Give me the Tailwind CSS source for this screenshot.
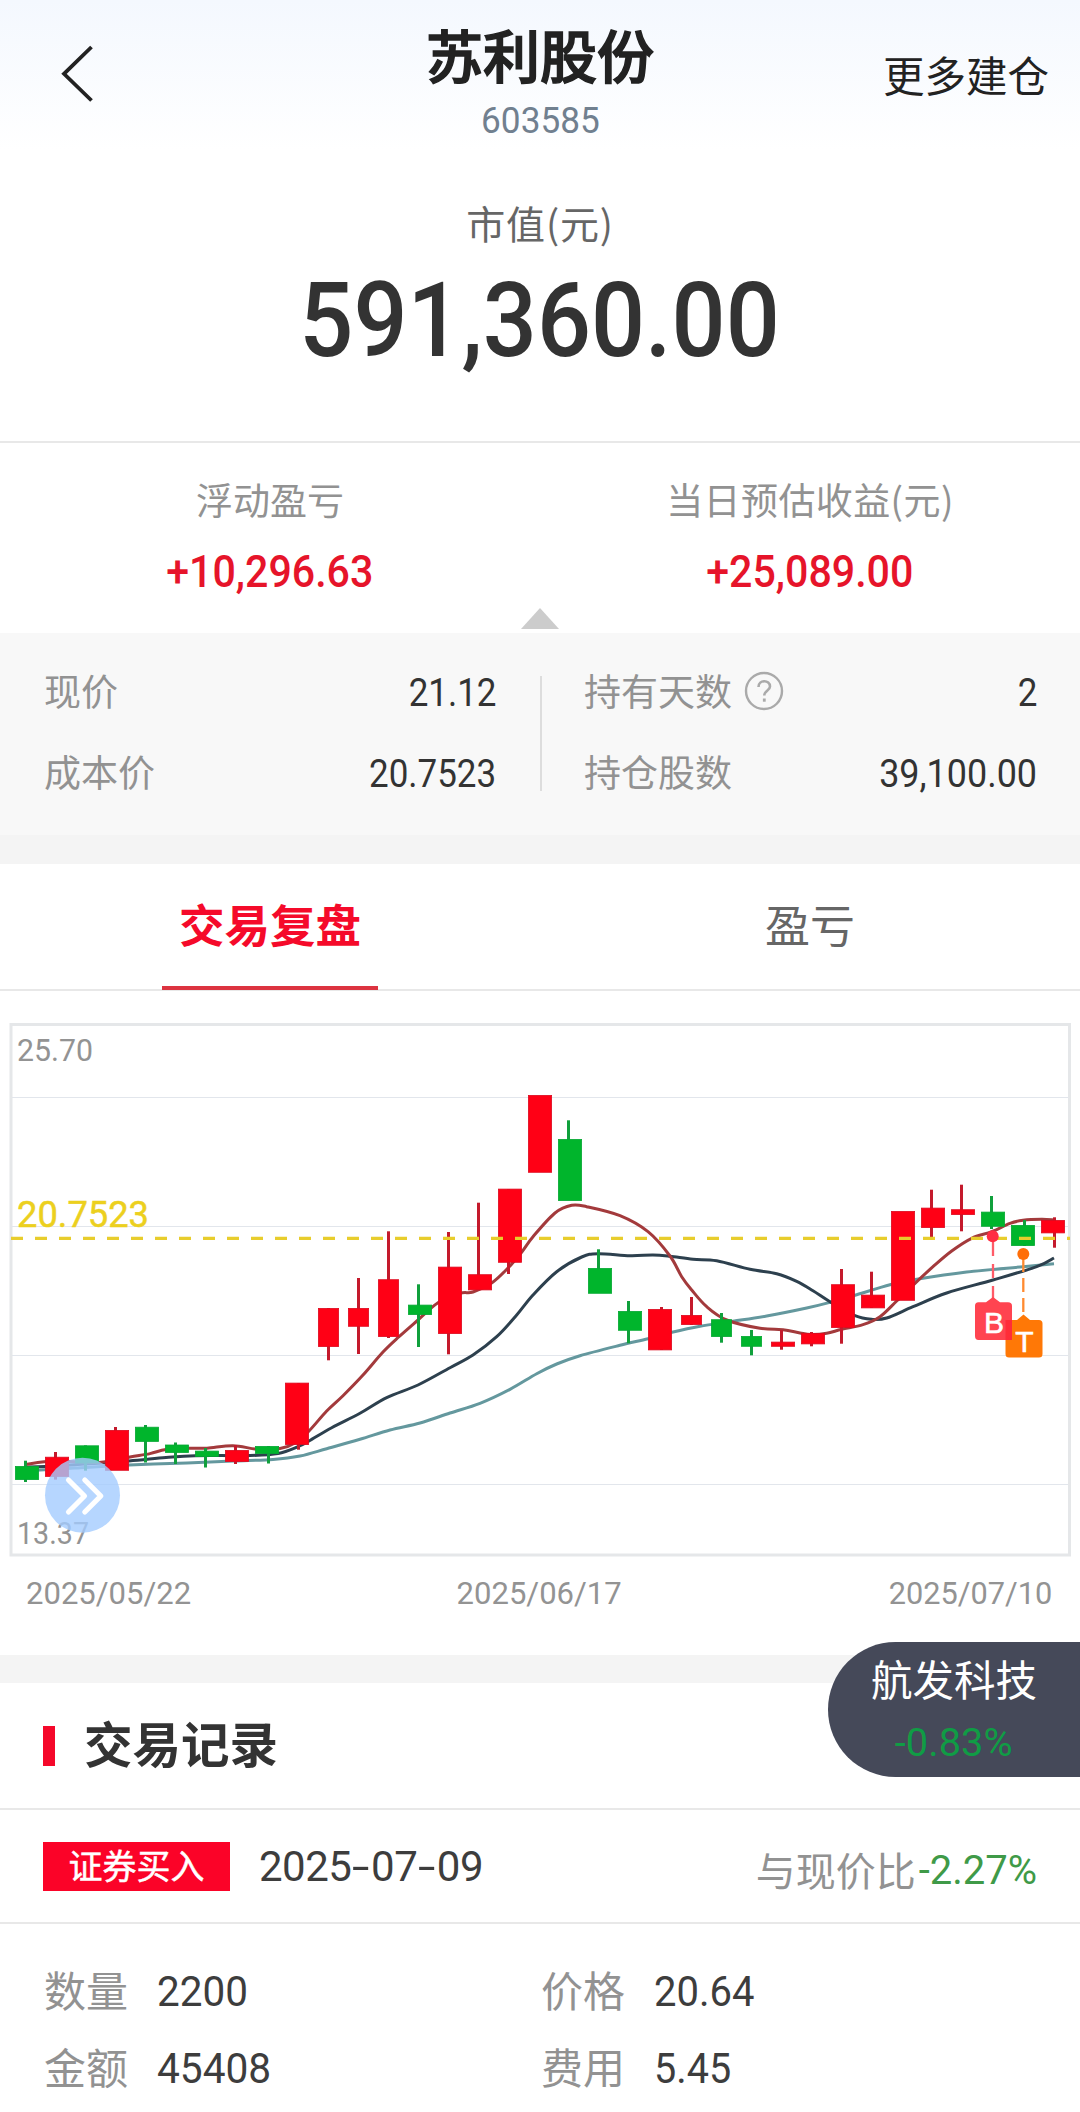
<!DOCTYPE html>
<html lang="zh-CN">
<head>
<meta charset="utf-8">
<title>苏利股份 603585</title>
<script src="https://cdn.jsdelivr.net/npm/@tailwindcss/browser@4"></script>
</head>
<body class="w-[1080px] h-[2112px] overflow-hidden bg-white font-['Noto_Sans_CJK_SC',sans-serif] text-[#333] whitespace-nowrap">
<div class="relative flex flex-col">

  <header class="flex h-[150px] bg-linear-to-b from-[#f4f8fe] to-white">
    <div class="w-[360px] pt-[44px] pl-[59px]">
      <svg class="w-[36px] h-[60px]" viewBox="0 0 36 60" fill="none" stroke="#222" stroke-width="3.800"><path d="M32.500 3 L5 29.800 L32.500 56.500"/></svg>
    </div>
    <div class="w-[360px] pt-[17px] flex flex-col items-center">
      <h1 class="h-[72px] flex items-center text-[57px] leading-none font-medium text-[#222] [-webkit-text-stroke:1.5px_#222]">苏利股份</h1>
      <div class="mt-[12px] h-[40px] flex items-center font-[Roboto,sans-serif] text-[37px] text-[#71808f] scale-x-[0.95]">603585</div>
    </div>
    <div class="w-[360px] pt-[49px] pr-[31px] flex justify-end">
      <span class="h-[50px] flex items-center text-[41.5px] text-[#222]">更多建仓</span>
    </div>
  </header>

  <section class="h-[293px] pt-[48px] flex flex-col items-center border-b-2 border-[#e8e8e8]">
    <div class="h-[48px] flex items-center text-[39px] text-[#666] tracking-[0.8px]">市值(元)</div>
    <div class="mt-[25px] h-[100px] flex items-center font-[Roboto,sans-serif] font-medium text-[104px] leading-none scale-x-[0.915]">591,360.00</div>
  </section>

  <section class="h-[190px] pt-[37px] flex flex-col">
    <div class="grid grid-cols-2 justify-items-center">
      <div class="h-[40px] flex items-center text-[37px] text-[#929292]">浮动盈亏</div>
      <div class="h-[40px] flex items-center text-[37px] text-[#929292] tracking-[0.4px]">当日预估收益(元)</div>
      <div class="mt-[30px] h-[44px] flex items-center font-[Roboto,sans-serif] font-medium text-[44px] text-[#e6142a] scale-x-[0.935]">+10,296.63</div>
      <div class="mt-[30px] h-[44px] flex items-center font-[Roboto,sans-serif] font-medium text-[44px] text-[#e6142a] scale-x-[0.935]">+25,089.00</div>
    </div>
    <svg class="mt-[14px] mx-auto w-[38px] h-[21px]" viewBox="0 0 38 21"><path d="M19 0 L38 21 H0Z" fill="#ccc"/></svg>
  </section>

  <section class="h-[202px] pt-[40px] bg-[#f8f8f8] flex">
    <div class="w-[540px] pl-[44px] pr-[44px] flex flex-col gap-[41px]">
      <div class="h-[40px] flex items-center justify-between"><span class="-translate-y-[2px] text-[37px] text-[#929292]">现价</span><span class="font-[Roboto,sans-serif] text-[38px] origin-right scale-x-[0.92]">21.12</span></div>
      <div class="h-[40px] flex items-center justify-between"><span class="-translate-y-[2px] text-[37px] text-[#929292]">成本价</span><span class="font-[Roboto,sans-serif] text-[38px] origin-right scale-x-[0.92]">20.7523</span></div>
    </div>
    <div class="mt-[3px] w-[2px] h-[115px] bg-[#ddd]"></div>
    <div class="w-[538px] pl-[42px] pr-[43px] flex flex-col gap-[41px]">
      <div class="h-[40px] flex items-center"><span class="-translate-y-[2px] text-[37px] text-[#929292]">持有天数</span>
        <svg class="ml-[12px] -translate-y-[2px] w-[40px] h-[40px]" viewBox="0 0 40 40" fill="none" stroke="#aaa" stroke-width="2.4"><circle cx="20" cy="20" r="18"/><path d="M14.500 16 C14.500 8.500 26 8.500 26 15.500 C26 19.500 20.300 19.500 20.300 24.500" stroke-width="2.600"/><path d="M20.300 27.500 v3.200" stroke-width="2.800"/></svg>
        <span class="ml-auto font-[Roboto,sans-serif] text-[38px] origin-right scale-x-[0.92]">2</span></div>
      <div class="h-[40px] flex items-center justify-between"><span class="-translate-y-[2px] text-[37px] text-[#929292]">持仓股数</span><span class="font-[Roboto,sans-serif] text-[38px] origin-right scale-x-[0.945]">39,100.00</span></div>
    </div>
  </section>

  <div class="h-[29px] bg-[#f4f4f4]"></div>

  <nav class="h-[127px] grid grid-cols-2 justify-items-center border-b-2 border-[#e8e8e8]">
    <div class="w-[216px] h-[126px] pb-[3px] flex items-center justify-center border-b-4 border-[#dc3340] text-[45.500px] font-bold text-[#f50a2a]">交易复盘</div>
    <div class="h-[122px] pb-[2px] flex items-center text-[45px] text-[#666]">盈亏</div>
  </nav>

  <section class="h-[663px]">
    <svg id="chart" class="block w-[1080px] h-[570px]" viewBox="0 991 1080 570" fill="none">
      <rect x="11" y="1024.500" width="1058.500" height="530.500" stroke="#e5e7e9" stroke-width="3"/>
      <path d="M12 1097.500H1068M12 1226.500H1068M12 1355.500H1068M12 1484.500H1068" stroke="#e2e6ec" stroke-width="1.200"/>
      <g font-family="Roboto, sans-serif">
        <text x="17" y="1060.500" font-size="31" fill="#939393" textLength="76" lengthAdjust="spacingAndGlyphs">25.70</text>
        <text x="17" y="1543.500" font-size="31" fill="#939393" textLength="72" lengthAdjust="spacingAndGlyphs">13.37</text>
        <text x="17" y="1226.500" font-size="37" fill="#ecd01e" stroke="#ecd01e" stroke-width=".5" textLength="132" lengthAdjust="spacingAndGlyphs">20.7523</text>
      </g>
      <g id="lines" stroke-width="3"></g>
      <g id="candles"></g>
      <path d="M11 1238.300H1070" stroke="#e8cd2c" stroke-width="3.300" stroke-dasharray="12 12"/>
      <path d="M993 1242V1298" stroke="#ff5b68" stroke-width="2.300" stroke-dasharray="14 8"/>
      <circle cx="992.700" cy="1236.300" r="6" fill="#ff2d42"/>
      <path d="M1023.300 1258V1316" stroke="#ff8a30" stroke-width="2.300" stroke-dasharray="14 6"/>
      <circle cx="1023.300" cy="1254" r="6" fill="#ff6e08"/>
      <path d="M1009 1320 H1017 L1023.500 1314.500 L1030 1320 H1039 Q1042.500 1320 1042.500 1323.500 V1354 Q1042.500 1357.500 1039 1357.500 H1009 Q1005.500 1357.500 1005.500 1354 V1323.500 Q1005.500 1320 1009 1320Z" fill="#ff7806"/>
      <path d="M978.500 1302.300 H986 L993 1297 L1000 1302.300 H1008 Q1012 1302.300 1012 1306 V1336 Q1012 1340 1008 1340 H978.500 Q975 1340 975 1336 V1306 Q975 1302.300 978.500 1302.300Z" fill="#ff4450"/>
      <rect x="1005.500" y="1320" width="6.500" height="20" fill="#ff2d38"/>
      <g font-family="Liberation Sans, Roboto, sans-serif" font-size="30" fill="#fff" stroke="#fff" stroke-width=".6" text-anchor="middle"><text x="994" y="1332.500">B</text><text x="1024.500" y="1351.500">T</text></g>
      <circle cx="82.500" cy="1495.200" r="37.500" fill="#a4ccff" fill-opacity=".8"/>
      <path d="M68.500 1480 L84.500 1496 L68.500 1512 M84.800 1480 L100.800 1496 L84.800 1512" stroke="#fff" stroke-width="5.200" stroke-linecap="round" stroke-linejoin="round"/>
    </svg>
    <div class="mt-[12px] h-[40px] pl-[26px] pr-[28px] flex items-center justify-between font-[Roboto,sans-serif] text-[32px] text-[#939393]">
      <span class="origin-left scale-x-[0.97]">2025/05/22</span><span class="scale-x-[0.97]">2025/06/17</span><span class="origin-right scale-x-[0.96]">2025/07/10</span>
    </div>
  </section>

  <div class="mt-px h-[28px] bg-[#f4f4f4]"></div>

  <section class="h-[127px] pl-[43px] flex items-center border-b-2 border-[#e8e8e8]">
    <div class="w-[12px] h-[40px] bg-[#f5082a]"></div>
    <h2 class="ml-[29px] -translate-y-[3px] text-[48.500px] font-bold leading-none">交易记录</h2>
  </section>

  <section class="h-[114px] pl-[43px] pr-[43px] flex items-center justify-between border-b-2 border-[#e8e8e8]">
    <div class="flex items-center">
      <span class="w-[187px] h-[49px] pb-[4px] bg-[#fb0328] text-white text-[34px] flex items-center justify-center [-webkit-text-stroke:0.5px_#fff]">证券买入</span>
      <span class="ml-[29px] flex translate-y-px font-[Roboto,sans-serif] text-[42px] leading-none text-[#3d3d3d]"><span class="tracking-[-0.5px]">2025</span><span class="mx-[4px] scale-x-[1.5]">-</span><span class="tracking-[-0.5px]">07</span><span class="mx-[4px] scale-x-[1.5]">-</span><span class="tracking-[-0.5px]">09</span></span>
    </div>
    <div class="mt-[10px] flex items-center text-[40px] text-[#929292]"><span class="-translate-y-[2px]">与现价比</span><span class="ml-[3px] font-[Roboto,sans-serif] text-[40px] text-[#3f9a48]">-2.27%</span></div>
  </section>

  <section class="pt-[42px] grid grid-cols-[497px_1fr] gap-y-[27px] pl-[44px] text-[42px] leading-none text-[#929292]">
    <div class="h-[50px] flex items-center"><span class="-translate-y-[2px]">数量</span><span class="ml-[29px] font-[Roboto,sans-serif] text-[43px] text-[#3d3d3d] origin-left scale-x-[0.94]">2200</span></div>
    <div class="h-[50px] flex items-center"><span class="-translate-y-[2px]">价格</span><span class="ml-[29px] font-[Roboto,sans-serif] text-[43px] text-[#3d3d3d] origin-left scale-x-[0.93]">20.64</span></div>
    <div class="h-[50px] flex items-center"><span class="-translate-y-[2px]">金额</span><span class="ml-[29px] font-[Roboto,sans-serif] text-[43px] text-[#3d3d3d] origin-left scale-x-[0.945]">45408</span></div>
    <div class="h-[50px] flex items-center"><span class="-translate-y-[2px]">费用</span><span class="ml-[29px] font-[Roboto,sans-serif] text-[43px] text-[#3d3d3d] origin-left scale-x-[0.92]">5.45</span></div>
  </section>

  <aside class="absolute right-0 top-[1642px] w-[252px] h-[135px] rounded-l-full bg-[#454959] flex flex-col items-center pt-[13px]">
    <div class="h-[48px] flex items-center text-[41.500px] leading-none text-white">航发科技</div>
    <div class="mt-[17px] h-[46px] flex items-center font-[Roboto,sans-serif] text-[39px] text-[#109c45] scale-x-[1.02]">-0.83%</div>
  </aside>
</div>

<script>
const NS = 'http://www.w3.org/2000/svg';
const add = (parent, tag, attrs) => {
  const el = document.createElementNS(NS, tag);
  for (const k in attrs) el.setAttribute(k, attrs[k]);
  document.getElementById(parent).appendChild(el);
};

// colour, left, width, body top, body bottom, wick x, wick top, wick bottom
const candles = [
['g',15,24,1466,1480,25.5,1460.7,1482],['r',45,24,1456.8,1476.8,55.5,1452,1479.6],['g',75,24,1445.4,1463.5,85.5,1445.4,1470.7],
['r',105,24,1430,1470.7,115.5,1427,1470],['g',135,24,1426.8,1441.8,145.5,1425,1462.5],['g',165,24,1444.6,1452.9,175.5,1442.5,1464],
['g',195,24,1450.7,1456.8,205.5,1448,1467.5],['r',225,24,1450,1462,235.5,1445,1464],['g',255,24,1446,1454,268.5,1446,1463.5],
['r',285,24,1382.7,1445,298.5,1383,1449.7],['r',318,21,1308,1347,328.5,1308,1360.3],['r',348,21,1308,1326.7,358.5,1278,1354],
['r',378,21,1279.3,1337,388.5,1231.3,1338],['g',408,24,1304.7,1315,418.5,1284.3,1347],['r',438,24,1266.7,1334,448.5,1232,1354.3],
['r',468,24,1274.3,1290.3,478.5,1202.7,1290],['r',498,24,1188.7,1262.7,508.5,1189,1274],['r',528,24,1095,1172.7,538.5,1096,1172],
['g',558,24,1139,1201,568.5,1120.3,1200],['g',588,24,1268,1293.7,598.5,1249.3,1293],['g',618,24,1311,1330.7,628.5,1301,1343.3],
['r',648,24,1309,1350.3,661.5,1307,1350],['r',681,21,1315,1325,691.5,1297,1325],['g',711,21,1319.3,1337,721.5,1313,1342.7],
['g',741,21,1336,1346.7,751.5,1330,1355.3],['r',771,24,1341.7,1346.7,781.5,1330,1349.7],['r',801,24,1333,1344.3,811.5,1332,1346.3],
['r',831,24,1284.3,1328,841.5,1269,1343.7],['r',861,24,1294.7,1308.3,871.5,1271.7,1308],['r',891,24,1211,1300.7,901.5,1212,1300],
['r',921,24,1207.7,1228,931.5,1189.7,1237],['r',951,24,1209.3,1215,961.5,1184.7,1231.3],['g',981,24,1211.7,1226.7,991.5,1196,1229],
['g',1011,24,1225,1246,1024.5,1220,1246],['r',1041,24,1220,1233.3,1054.5,1217.3,1247.7]];
for (const [c,x,w,t,b,wx,wt,wb] of candles) {
  add('candles','rect',{x:wx-1.5,y:wt,width:3,height:wb-wt,fill:c==='r'?'#c41a2c':'#10a03c'});
  add('candles','rect',{x:x+.4,y:t+.4,width:w-.8,height:b-t-.8,fill:c==='r'?'#ff0015':'#00b52c',stroke:c==='r'?'#dd0a20':'#06a834','stroke-width':.8});
}

const averages = [
['#64989e',[25,1470.5,40,1470,75,1468,129,1465,187,1462.9,233,1461,273,1459.5,300,1456,326.7,1448.7,360,1439.3,390,1430,420,1423,450,1413,480,1403.3,510,1389.3,536.7,1373.7,556.7,1364,580,1355.7,620,1345.3,648,1338.7,672,1332.3,700,1326.3,733,1321.3,766.7,1316,806.7,1308,830,1302.3,856.7,1294.7,890,1284.7,916.7,1279.3,966.7,1272,1023,1266.7,1054,1263.7]],
['#2d404e',[25,1467,45,1466.5,85,1464,129,1461,166,1457.5,195,1455.7,250,1455.5,278,1453.5,298,1446.7,309,1441,331.7,1427.7,360,1413.3,386.7,1397.7,418,1385,450,1367.7,473,1355,496.7,1336.7,516.7,1315,533,1295,556.7,1271.7,581.7,1257,598,1253.7,630,1255.7,653,1255,670,1256.3,693,1259.3,716.7,1260.7,750,1269.3,776.7,1273.7,796.7,1281.3,813,1290.7,830,1301.7,855,1315.7,871.7,1319.3,886.7,1318,913,1306.7,946.7,1293,993,1280,1036.7,1266.7,1054,1258]],
['#a33a3c',[25,1464.5,55,1461,99,1462.5,130,1457,150,1453.6,166,1449.6,189,1448.2,207,1448.2,233,1445.7,258,1449.3,280,1448.6,295,1443,309,1431,326.7,1411,343,1395.7,363,1375,383,1352,399,1336.7,418,1320,438,1302.7,460,1293.3,473,1292,492,1282.7,508,1268,522,1251.7,533,1236.7,555,1213,571.7,1205.3,586.7,1206.7,620,1215.7,648,1231.7,670,1256,681.7,1276.7,691.7,1290,706.7,1306.7,726.7,1320,760,1328.3,783,1329.7,800,1333,811,1334.5,826.7,1333.3,841.7,1329.3,863,1324.7,880,1316.7,896.7,1301,915,1283.3,933,1266.7,951.7,1251,971.7,1238.3,991.7,1231.7,1010,1223.3,1023,1220.3,1041.7,1219.3,1054,1220]]];
for (const [stroke, v] of averages) {
  const p = [];
  for (let i = 0; i < v.length; i += 2) p.push([v[i], v[i+1]]);
  let d = `M${p[0]}`;
  for (let i = 0; i < p.length-1; i++) {
    const a = p[Math.max(i-1,0)], b = p[i], c = p[i+1], e = p[Math.min(i+2,p.length-1)];
    d += `C${b[0]+(c[0]-a[0])/6},${b[1]+(c[1]-a[1])/6} ${c[0]-(e[0]-b[0])/6},${c[1]-(e[1]-b[1])/6} ${c}`;
  }
  add('lines','path',{d,stroke});
}
</script>
</body>
</html>
